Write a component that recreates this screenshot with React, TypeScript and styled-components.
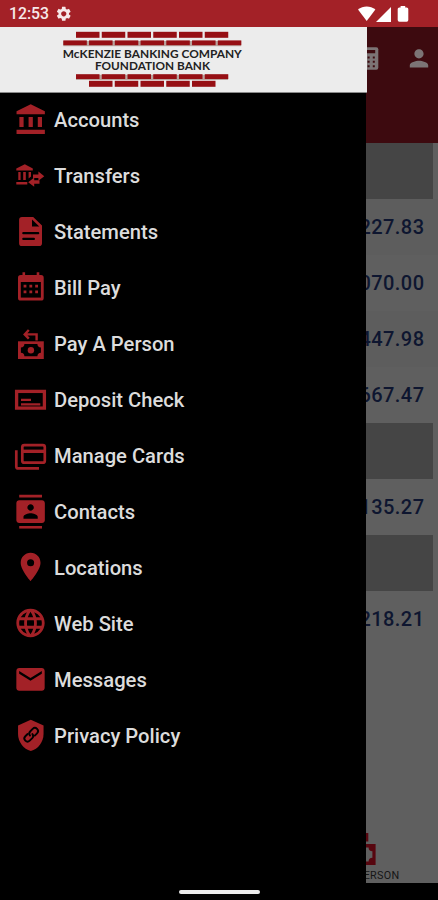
import React from "react";
import styled, { createGlobalStyle } from "styled-components";
import {
  MdAccountBalance,
  MdContacts,
  MdEmail,
  MdLanguage,
  MdLocationOn,
  MdPerson,
  MdSettings,
  MdShield,
} from "react-icons/md";

const GlobalStyle = createGlobalStyle`
  * { box-sizing: border-box; }
  body { margin: 0; background: #000; }
`;

const RED = "#a32127";

const Screen = styled.div`
  display: flex;
  flex-direction: column;
  width: 438px;
  height: 900px;
  overflow: hidden;
  background: #000;
  font-family: Roboto, "Liberation Sans", sans-serif;
`;

const StatusBar = styled.header`
  display: flex;
  align-items: center;
  flex: none;
  height: 27px;
  padding: 1px 29px 0 9px;
  background: ${RED};
  color: #f6e9e9;
`;

const Clock = styled.span`
  width: 46px;
  font-size: 15.8px;
  font-weight: 500;
  line-height: 24px;
`;

const StatusIcons = styled.svg`
  margin-left: auto;
  margin-top: -1px;
  display: block;
`;

const Body = styled.div`
  display: flex;
  height: 855.5px;
`;

const Drawer = styled.nav`
  flex: none;
  width: 366px;
  background: #000;
  z-index: 1;
`;

const LogoPanel = styled.div`
  display: flex;
  width: 367px;
  height: 66px;
  margin-bottom: -1px;
  background: #ececec;
  border-bottom: 1px solid #8a8a8a;
`;

const MenuItem = styled.a`
  display: flex;
  align-items: center;
  height: 56px;
  color: #dcdcdc;
`;

const Glyph = styled.svg`
  flex: none;
  display: block;
  color: ${RED};
`;

const Label = styled.span`
  font-size: 20.2px;
  font-weight: 500;
  line-height: 24px;
  padding-bottom: 1px;
  white-space: nowrap;
`;

const Backdrop = styled.main`
  display: flex;
  flex-direction: column;
  flex: 1;
  min-width: 0;
  overflow: hidden;
  background: #5f5f5f;
`;

const TopBar = styled.div`
  flex: none;
  height: 116px;
  background: #3d0a0f;
`;

const SectionBand = styled.div`
  flex: none;
  height: 56px;
  margin-right: 5px;
  background: #454545;
`;

const AmountRow = styled.div<{ $shade: boolean }>`
  display: flex;
  flex: none;
  align-items: center;
  justify-content: flex-end;
  height: 56px;
  padding-right: 13.5px;
  background: ${(p) => (p.$shade ? "#5d5d5d" : "#5f5f5f")};
  color: #0e1630;
  font-size: 20px;
  font-weight: 500;
  letter-spacing: 0.45px;
`;

const Shortcut = styled.div`
  display: flex;
  flex-direction: column;
  margin-top: auto;
  height: 51px;
  overflow: hidden;
`;

const ShortcutLabel = styled.span`
  display: flex;
  justify-content: flex-end;
  width: 33.5px;
  font-size: 10.8px;
  letter-spacing: 0.3px;
  line-height: 13px;
  color: #151515;
  white-space: nowrap;
`;

const NavBar = styled.footer`
  display: flex;
  justify-content: center;
  flex: 1;
  padding-top: 7.5px;
`;

const HomePill = styled.div`
  width: 81px;
  height: 4px;
  border-radius: 2px;
  background: #ececec;
`;

const courses = [
  { x: 76, y: 4.8, h: 6, count: 6, mortar: false },
  { x: 63.3, y: 13.4, h: 4.8, count: 7, mortar: true },
  { x: 76, y: 47.2, h: 4.8, count: 6, mortar: true },
  { x: 89, y: 53.8, h: 6, count: 5, mortar: false },
];

const Logo = () => (
  <svg width="367" height="65" viewBox="0 0 367 65">
    {courses.map((c) => (
      <g key={c.y}>
        {c.mortar && (
          <rect x={c.x} y={c.y + 0.6} width={c.count * 25.75 - 2.4} height={c.h + 0.4} fill="#b9a49e" />
        )}
        {Array.from({ length: c.count }, (_, i) => (
          <rect key={i} x={c.x + i * 25.75} y={c.y} width="23.5" height={c.h} fill="#960f14" />
        ))}
      </g>
    ))}
    <g fill="#222" fontFamily="Lato, sans-serif" fontWeight="700" fontSize="10.6">
      <text x="62.8" y="30.7" textLength="179" lengthAdjust="spacingAndGlyphs">McKENZIE BANKING COMPANY</text>
      <text x="95" y="42.6" textLength="115" lengthAdjust="spacingAndGlyphs">FOUNDATION BANK</text>
    </g>
  </svg>
);

const TransferArt = () => (
  <g fill="currentColor">
    <path d="M16.3 22.6v-2l8.5-4.4 8 4.4v2z" />
    <path d="M18.3 24h2.3v8h-2.3zM23.2 24h2.6v8h-2.6zM28.6 24h2.4v4.4l-2.4 2zM16.3 34h11v2.4h-11z" />
    <path d="M33 26.4h5.4v-3l5.9 4.8-5.9 4.6v-2.9H33z" />
    <path d="M39.5 32.3h-5.3v-2.9L28.2 34.2l6 4.6v-3h5.3z" />
  </g>
);

const StatementArt = () => (
  <>
    <path fill="currentColor" d="M22 13h11.2L42 21.6v17.7a2.8 2.8 0 0 1-2.8 2.8H22a2.9 2.9 0 0 1-2.9-2.9V15.9A2.9 2.9 0 0 1 22 13z" />
    <path d="M32 15.4v7.1h7.3z" fill="#000" />
    <path d="M23.3 29.2h14.9M23.3 34.9h10.6" stroke="#000" strokeWidth="2.2" strokeLinecap="round" />
  </>
);

const CalendarArt = () => (
  <>
    <path fill="currentColor" d="M22.5 12.3h2.6V15h11.6v-2.7h2.6V15h1.7a2.7 2.7 0 0 1 2.7 2.7v20.2a2.7 2.7 0 0 1-2.7 2.7H20.7a2.7 2.7 0 0 1-2.7-2.7V17.7a2.7 2.7 0 0 1 2.7-2.7h1.8z" />
    <path d="M20.8 22h20.1v15.6H20.8z" fill="#000" />
    <path fill="currentColor" d="M23.6 24.7h2.8v2.8h-2.8zM29.4 24.7h2.8v2.8h-2.8zM35.2 24.7H38v2.8h-2.8zM23.6 30.4h2.8v2.8h-2.8zM29.4 30.4h2.8v2.8h-2.8zM35.2 30.4H38v2.8h-2.8z" />
  </>
);

const CashArt = () => (
  <>
    <path fill="currentColor" d="M18 25.3h25.8V43H18z" />
    <path d="M24.4 28h13a3.6 3.6 0 0 0 3.5 3.5v5.2a3.6 3.6 0 0 0-3.5 3.5h-13a3.6 3.6 0 0 0-3.5-3.5v-5.2a3.6 3.6 0 0 0 3.5-3.5z" fill="#000" />
    <circle cx="30.9" cy="34.2" r="3.2" fill="currentColor" />
    <path d="M28.8 14l-4.1 4.4 4.1 4.3M25 18.4h11.6v6" fill="none" stroke="currentColor" strokeWidth="2.4" />
  </>
);

const CheckArt = () => (
  <>
    <rect x="16.6" y="19.4" width="27.8" height="16.7" fill="none" stroke="currentColor" strokeWidth="3.3" />
    <path d="M21 27.9h10M21 32.4h19.3" stroke="currentColor" strokeWidth="2.1" />
  </>
);

const CardsArt = () => (
  <g fill="none" stroke="currentColor" strokeWidth="2.7">
    <rect x="22.3" y="17.2" width="22.5" height="17.5" rx="2" />
    <path d="M22.3 23.3h22.5" strokeWidth="3.4" />
    <path d="M16.3 22.2v16.2a2 2 0 0 0 2 2H39" />
  </g>
);

const ShieldArt = () => (
  <>
    <MdShield x={13.8} y={10.3} size={34} />
    <g transform="translate(31.2 26.8) rotate(-45)" fill="none" stroke="#000" strokeWidth="1.9" strokeLinecap="round">
      <path d="M-2 -3.1h-3.2a3.1 3.1 0 0 0 0 6.2h3.6a3.1 3.1 0 0 0 3-2.8" />
      <path d="M2 3.1h3.2a3.1 3.1 0 0 0 0-6.2H1.6a3.1 3.1 0 0 0-3 2.8" />
    </g>
  </>
);

const items: { label: string; art: React.ReactNode }[] = [
  { label: "Accounts", art: <MdAccountBalance x={13.7} y={10.8} size={34} /> },
  { label: "Transfers", art: <TransferArt /> },
  { label: "Statements", art: <StatementArt /> },
  { label: "Bill Pay", art: <CalendarArt /> },
  { label: "Pay A Person", art: <CashArt /> },
  { label: "Deposit Check", art: <CheckArt /> },
  { label: "Manage Cards", art: <CardsArt /> },
  { label: "Contacts", art: <MdContacts x={13.5} y={10.6} size={34.2} /> },
  { label: "Locations", art: <MdLocationOn x={13.6} y={10} size={34} /> },
  { label: "Web Site", art: <MdLanguage x={13.5} y={10} size={34} /> },
  { label: "Messages", art: <MdEmail x={13.5} y={10.4} size={34} /> },
  { label: "Privacy Policy", art: <ShieldArt /> },
];

const ledger: (string | null)[] = [
  null, "227.83", "070.00", "447.98", "667.47", null, "135.27", null, "218.21",
];

export default function App() {
  return (
    <Screen>
      <GlobalStyle />
      <StatusBar>
        <Clock>12:53</Clock>
        <MdSettings size={17.5} />
        <StatusIcons width="52" height="18" viewBox="357 5 52 18">
          <g fill="#fff">
            <path d="M358 9.6c5-4.3 12.4-4.3 17.4 0L366.7 21z" />
            <path d="M391 7v15h-15z" />
            <path d="M400.6 6h4.6v1.5h1.5a1.6 1.6 0 0 1 1.6 1.6v11a1.6 1.6 0 0 1-1.6 1.6h-7.4a1.6 1.6 0 0 1-1.6-1.6v-11a1.6 1.6 0 0 1 1.6-1.6h1.3z" />
          </g>
        </StatusIcons>
      </StatusBar>
      <Body>
        <Drawer>
          <LogoPanel>
            <Logo />
          </LogoPanel>
          {items.map((item) => (
            <MenuItem key={item.label}>
              <Glyph width="54" height="56" viewBox="0 0 54 56">{item.art}</Glyph>
              <Label>{item.label}</Label>
            </MenuItem>
          ))}
        </Drawer>
        <Backdrop>
          <TopBar>
            <Glyph width="72" height="116" viewBox="366 27 72 116">
              <rect x="360" y="47.3" width="18.3" height="22.5" rx="2" fill="#7c7475" />
              <path d="M362.5 50h12.7v3.3h-12.7zM367.6 56.5h2v2h-2zM372.8 56.5h2v2h-2zM367.6 60.8h2v2h-2zM372.8 60.8h2v2h-2zM367.6 65.2h2v2h-2zM372.8 65.2h2v2h-2z" fill="#3d0a0f" />
              <MdPerson x={405.2} y={44.6} size={27.6} color="#7c7475" />
            </Glyph>
          </TopBar>
          {ledger.map((amount, i) =>
            amount === null ? (
              <SectionBand key={i} />
            ) : (
              <AmountRow key={i} $shade={i === 1 || i === 3}>{amount}</AmountRow>
            )
          )}
          <Shortcut>
            <svg width="72" height="37" viewBox="0 0 72 37">
              <path d="M0 1h2.3v8.5H0zM0 12h9.6v21H0z" fill="#57060f" />
              <path d="M0 15.5h2.6a3.8 3.8 0 0 0 3.8 3.8v6.4a3.8 3.8 0 0 0-3.8 3.8H0z" fill="#5f5f5f" />
            </svg>
            <ShortcutLabel>PAY A PERSON</ShortcutLabel>
          </Shortcut>
        </Backdrop>
      </Body>
      <NavBar>
        <HomePill />
      </NavBar>
    </Screen>
  );
}
